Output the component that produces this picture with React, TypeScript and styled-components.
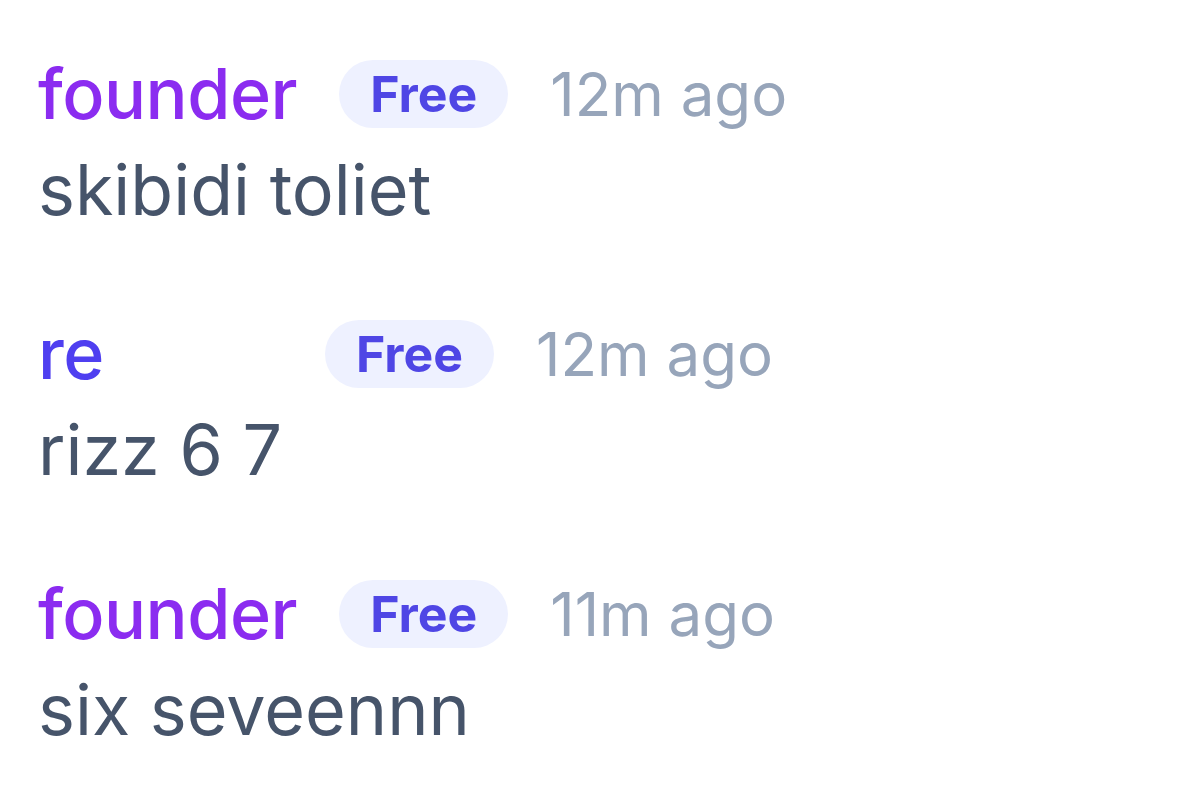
import React from 'react';
import styled, { createGlobalStyle } from 'styled-components';

const GlobalStyle = createGlobalStyle`
  html, body {
    margin: 0;
    padding: 0;
    background: #ffffff;
    font-family: Inter, 'Noto Sans', sans-serif;
  }
`;

interface Message {
  author: string;
  role: 'founder' | 'member';
  plan: string;
  time: string;
  text: string;
}

const messages: Message[] = [
  { author: 'founder', role: 'founder', plan: 'Free', time: '12m ago', text: 'skibidi toliet' },
  { author: 're', role: 'member', plan: 'Free', time: '12m ago', text: 'rizz 6 7' },
  { author: 'founder', role: 'founder', plan: 'Free', time: '11m ago', text: 'six seveennn' },
];

const Feed = styled.div`
  display: flex;
  flex-direction: column;
  gap: 88px;
  padding: 60px 38px 0;
`;

const Item = styled.div`
  display: flex;
  flex-direction: column;
`;

const Header = styled.div`
  display: flex;
  align-items: center;
  gap: 42px;
  height: 68px;
`;

const Author = styled.span<{ $founder: boolean }>`
  min-width: 245px;
  font-size: 70px;
  font-weight: 500;
  letter-spacing: -0.5px;
  line-height: 1;
  color: ${(p) => (p.$founder ? '#8b2cf0' : '#4f3ff0')};
`;

const Badge = styled.span`
  display: inline-flex;
  align-items: center;
  height: 68px;
  padding: 0 31px;
  border-radius: 34px;
  background: #eef1ff;
  color: #4f46e5;
  font-size: 50px;
  font-weight: 700;
`;

const Time = styled.span`
  font-size: 60px;
  color: #97a5ba;
  line-height: 1;
`;

const Body = styled.p`
  margin: 20px 0 0;
  font-size: 70px;
  line-height: 1.2;
  color: #46546a;
`;

const App: React.FC = () => {
  return (
    <>
      <GlobalStyle />
      <Feed>
        {messages.map((m, i) => (
          <Item key={i}>
            <Header>
              <Author $founder={m.role === 'founder'}>{m.author}</Author>
              <Badge>{m.plan}</Badge>
              <Time>{m.time}</Time>
            </Header>
            <Body>{m.text}</Body>
          </Item>
        ))}
      </Feed>
    </>
  );
};

export default App;
